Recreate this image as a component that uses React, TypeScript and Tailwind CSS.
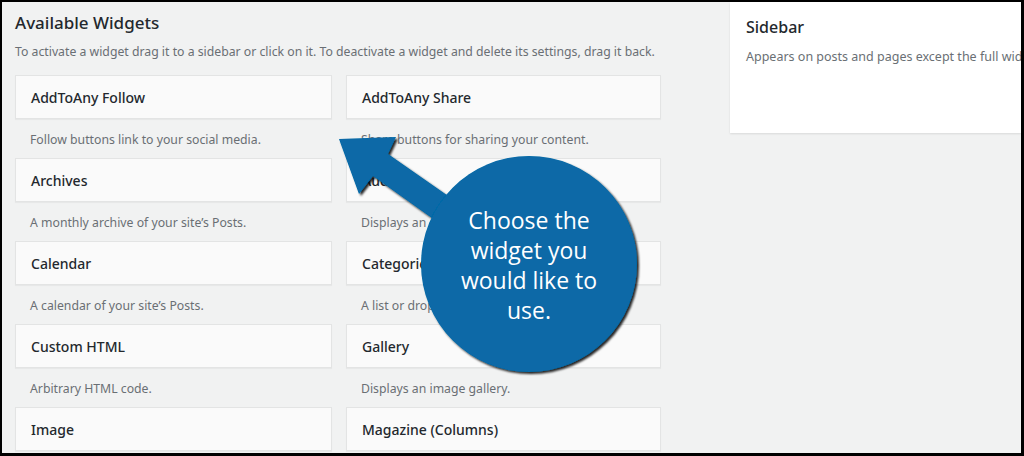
import React from 'react';

type Widget = { title: string; desc: string };

const left: Widget[] = [
    { title: 'AddToAny Follow', desc: 'Follow buttons link to your social media.' },
    { title: 'Archives', desc: 'A monthly archive of your site’s Posts.' },
    { title: 'Calendar', desc: 'A calendar of your site’s Posts.' },
    { title: 'Custom HTML', desc: 'Arbitrary HTML code.' },
    { title: 'Image', desc: 'Displays an image.' },
];

const right: Widget[] = [
    { title: 'AddToAny Share', desc: 'Share buttons for sharing your content.' },
    { title: 'Audio', desc: 'Displays an audio player.' },
    { title: 'Categories', desc: 'A list or dropdown of categories.' },
    { title: 'Gallery', desc: 'Displays an image gallery.' },
    { title: 'Magazine (Columns)', desc: 'Displays your posts in columns.' },
];

function WidgetItem({ w }: { w: Widget }) {
    return (
        <div>
            <div className="h-[44px] flex items-center px-[15px] bg-[#fafafa] border border-[#e3e4e4] shadow-[0_1px_1px_rgba(0,0,0,0.04)]">
                <span className="text-[14px] font-medium text-[#23282d]">{w.title}</span>
            </div>
            <p className="pt-[12px] pb-[9px] px-[15px] text-[12.25px] leading-[18px] text-[#6a6f74] whitespace-nowrap">
                {w.desc}
            </p>
        </div>
    );
}

function Callout() {
    return (
        <>
            <svg className="absolute inset-0 pointer-events-none" width="1024" height="456" viewBox="0 0 1024 456">
                <defs>
                    <filter id="sh" x="-20%" y="-20%" width="140%" height="140%">
                        <feDropShadow dx="2" dy="2" stdDeviation="1.2" floodColor="#000" floodOpacity="0.85" />
                    </filter>
                </defs>
                <g filter="url(#sh)" fill="#0769a7">
                    <polygon points="337,137 394,135 386,152 462,205 444,226 371,174 357,192" />
                    <circle cx="527" cy="262" r="108" />
                </g>
            </svg>
            <div className="absolute left-[419px] top-[203px] w-[216px] text-center text-white text-[23px] leading-[30px] font-['Open_Sans',sans-serif]">
                Choose the<br />widget you<br />would like to<br />use.
            </div>
        </>
    );
}

export default function App() {
    return (
        <div className="relative w-[1024px] h-[456px] overflow-hidden bg-[#f1f2f2] border-black border-t-2 border-l-2 border-r-[3px] border-b-[3px] font-['Noto_Sans',sans-serif]">
            <div className="flex justify-between h-full">
                <div className="w-[659px] pl-[13px]">
                    <h2 className="pt-[10px] text-[17px] leading-[22px] font-medium text-[#23282d]">Available Widgets</h2>
                    <p className="mt-[9px] text-[12.25px] leading-[18px] text-[#6a6f74] whitespace-nowrap">
                        To activate a widget drag it to a sidebar or click on it. To deactivate a widget and delete its settings, drag it back.
                    </p>
                    <div className="mt-[14px] grid grid-cols-[317px_315px] gap-x-[14px]">
                        <div>
                            {left.map((w) => (
                                <WidgetItem key={w.title} w={w} />
                            ))}
                        </div>
                        <div>
                            {right.map((w) => (
                                <WidgetItem key={w.title} w={w} />
                            ))}
                        </div>
                    </div>
                </div>
                <div className="w-[291px] self-start h-[131px] bg-white shadow-[0_1px_2px_rgba(0,0,0,0.1)] px-[16px] pt-[13px] overflow-hidden">
                    <h3 className="text-[16px] leading-[24px] font-medium text-[#23282d]">Sidebar</h3>
                    <p className="mt-[9px] text-[12.5px] leading-[18px] text-[#6a6f74] whitespace-nowrap">
                        Appears on posts and pages except the full width template.
                    </p>
                </div>
            </div>
            <Callout />
        </div>
    );
}
